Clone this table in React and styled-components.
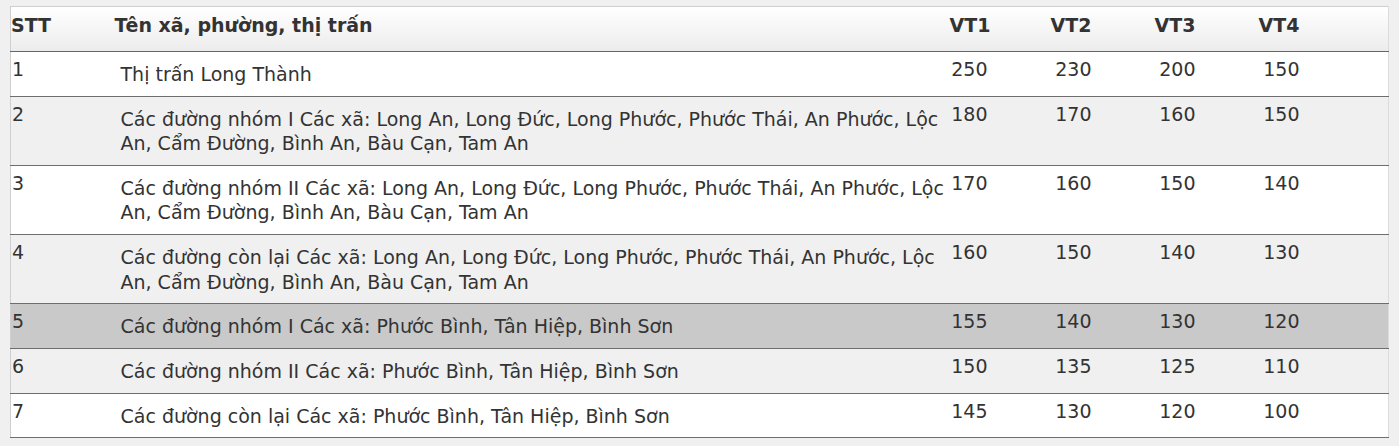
import React from 'react';
import styled, { createGlobalStyle } from 'styled-components';

const GlobalStyle = createGlobalStyle`
  html, body {
    margin: 0;
    padding: 0;
    background: #f0f0f0;
  }
  body {
    font-family: 'DejaVu Sans', 'Liberation Sans', sans-serif;
    color: #333;
  }
`;

// vùng bao ngoài bảng giá đất
const Page = styled.div`
  padding: 6px 10px 0 10px;
  width: 1379px;
`;

const PriceTable = styled.table`
  width: 1379px;
  table-layout: fixed;
  border-collapse: collapse;
  border-top: 1px solid #cfcfcf;
  border-left: 1px solid #cfcfcf;
  border-right: 1px solid #dcdcdc;
  font-size: 19px;
`;

const HeadRow = styled.tr`
  height: 45px;
  background: linear-gradient(#ffffff, #ececec);
  border-bottom: 1px solid #666;
`;

const HeadCell = styled.th`
  font-weight: bold;
  color: #333;
  text-align: ${(p) => (p.$right ? 'right' : 'left')};
  padding: 0 ${(p) => (p.$right ? '4px' : '0')} 8px 0;
  vertical-align: middle;
`;

const BodyRow = styled.tr`
  background: ${(p) => (p.$hover ? '#c9c9c9' : p.$even ? '#f0f0f0' : '#ffffff')};
  border-bottom: 1px solid #6e6e6e;
`;

const NumCell = styled.td`
  vertical-align: top;
  padding: 5px 4px 0 0;
  line-height: 24.5px;
  text-align: right;
`;

const SttCell = styled.td`
  vertical-align: top;
  padding: 5px 0 0 1px;
  line-height: 24.5px;
`;

const NameCell = styled.td`
  vertical-align: top;
  padding: 10px 4px 9.2px 6px;
  line-height: 24.5px;
`;

const rows = [
  ['1', 'Thị trấn Long Thành', 250, 230, 200, 150],
  ['2', 'Các đường nhóm I Các xã: Long An, Long Đức, Long Phước, Phước Thái, An Phước, Lộc An, Cẩm Đường, Bình An, Bàu Cạn, Tam An', 180, 170, 160, 150],
  ['3', 'Các đường nhóm II Các xã: Long An, Long Đức, Long Phước, Phước Thái, An Phước, Lộc An, Cẩm Đường, Bình An, Bàu Cạn, Tam An', 170, 160, 150, 140],
  ['4', 'Các đường còn lại Các xã: Long An, Long Đức, Long Phước, Phước Thái, An Phước, Lộc An, Cẩm Đường, Bình An, Bàu Cạn, Tam An', 160, 150, 140, 130],
  ['5', 'Các đường nhóm I Các xã: Phước Bình, Tân Hiệp, Bình Sơn', 155, 140, 130, 120],
  ['6', 'Các đường nhóm II Các xã: Phước Bình, Tân Hiệp, Bình Sơn', 150, 135, 125, 110],
  ['7', 'Các đường còn lại Các xã: Phước Bình, Tân Hiệp, Bình Sơn', 145, 130, 120, 100],
];

export default function App() {
  return (
    <Page>
      <GlobalStyle />
      <PriceTable>
        <colgroup>
          <col style={{ width: 104 }} />
          <col style={{ width: 835 }} />
          <col style={{ width: 42 }} />
          <col style={{ width: 104 }} />
          <col style={{ width: 104 }} />
          <col style={{ width: 104 }} />
          <col />
        </colgroup>
        <thead>
          <HeadRow>
            <HeadCell>STT</HeadCell>
            <HeadCell>Tên xã, phường, thị trấn</HeadCell>
            <HeadCell $right>VT1</HeadCell>
            <HeadCell $right>VT2</HeadCell>
            <HeadCell $right>VT3</HeadCell>
            <HeadCell $right>VT4</HeadCell>
            <HeadCell />
          </HeadRow>
        </thead>
        <tbody>
          {rows.map((r, i) => (
            <BodyRow key={r[0]} $even={i % 2 === 1} $hover={i === 4}>
              <SttCell>{r[0]}</SttCell>
              <NameCell>{r[1]}</NameCell>
              <NumCell>{r[2]}</NumCell>
              <NumCell>{r[3]}</NumCell>
              <NumCell>{r[4]}</NumCell>
              <NumCell>{r[5]}</NumCell>
              <NumCell />
            </BodyRow>
          ))}
        </tbody>
      </PriceTable>
    </Page>
  );
}
